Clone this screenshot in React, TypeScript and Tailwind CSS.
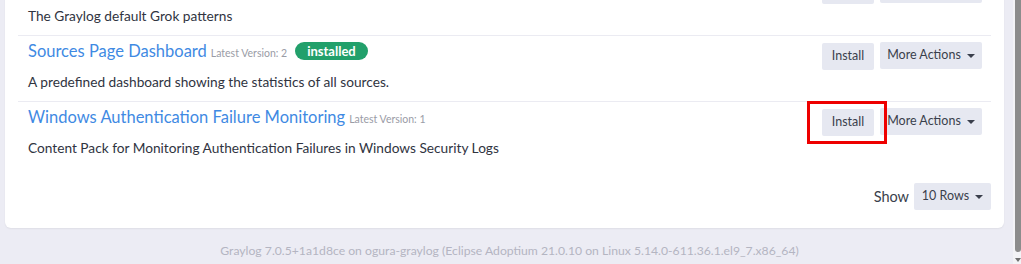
type Pack = {
  title: string;
  version: number;
  description: string;
  installed?: boolean;
  highlight?: boolean;
};

const packs: Pack[] = [
  { title: "Core Grok Patterns", version: 1, description: "The Graylog default Grok patterns" },
  { title: "Sources Page Dashboard", version: 2, description: "A predefined dashboard showing the statistics of all sources.", installed: true },
  {
    title: "Windows Authentication Failure Monitoring",
    version: 1,
    description: "Content Pack for Monitoring Authentication Failures in Windows Security Logs",
    highlight: true,
  },
];

function Caret() {
  return <span className="ml-[6px] inline-block h-0 w-0 border-x-[4px] border-t-[4px] border-x-transparent border-t-[#3a3f4c] align-middle" />;
}

function PackRow({ pack, last }: { pack: Pack; last: boolean }) {
  return (
    <div className={`flex justify-between pl-[10px] pr-[9px] pt-[4px] pb-[9px] ${last ? "" : "border-b border-[#ebebf2]"}`}>
      <div>
        <div className="flex h-[22px] items-baseline">
          <span className="text-[16.5px] leading-[22px] text-[#3f8ae3]">{pack.title}</span>
          <span className="ml-[4px] text-[10.5px] text-[#9a9ca6]">Latest Version: {pack.version}</span>
          {pack.installed && (
            <span className="ml-[8px] self-center rounded-full bg-[#22a06b] px-[12px] text-[13px] font-bold leading-[18px] text-white">
              installed
            </span>
          )}
        </div>
        <p className="mt-[10px] text-[13.7px] leading-[20px] text-[#30343f]">{pack.description}</p>
      </div>
      <div className="mt-[2px] flex h-[27px] shrink-0 gap-[6px]">
        <div className="relative">
          <button className="h-[27px] w-[52px] rounded-[2px] bg-[#e6e8f1] text-[12.5px] text-[#3a3f4c]">Install</button>
          {pack.highlight && (
            <div className="pointer-events-none absolute -left-[15px] -right-[13px] -top-[7px] -bottom-[9px] border-[3px] border-[#ee0000]" />
          )}
        </div>
        <button className="flex h-[27px] w-[102px] items-center justify-center rounded-[2px] bg-[#e6e8f1] text-[12.5px] text-[#3a3f4c]">
          More Actions
          <Caret />
        </button>
      </div>
    </div>
  );
}

export default function App() {
  return (
    <div className="flex h-[264px] w-[1021px] overflow-hidden bg-[#ececf4] font-['Lato',sans-serif]">
      <div className="min-w-0 flex-1 pl-[5px] pr-[9px]">
        <div className="-mt-[42px] rounded-[6px] bg-white px-[13px] pt-[12px] pb-[18px] shadow-[0_1px_2px_rgba(0,0,0,0.06)]">
          {packs.map((p, i) => (
            <PackRow key={p.title} pack={p} last={i === packs.length - 1} />
          ))}
          <div className="mt-[16px] flex items-center justify-end gap-[5px]">
            <span className="text-[14.5px] text-[#3a3f4c]">Show</span>
            <button className="flex h-[27px] w-[77px] items-center justify-center rounded-[2px] bg-[#e6e8f1] text-[12.5px] text-[#3a3f4c]">
              10 Rows
              <Caret />
            </button>
          </div>
        </div>
        <p className="mt-[14px] pl-[10px] text-center text-[12.2px] text-[#b4b5c2]">
          Graylog 7.0.5+1a1d8ce on ogura-graylog (Eclipse Adoptium 21.0.10 on Linux 5.14.0-611.36.1.el9_7.x86_64)
        </p>
      </div>
      <div className="flex w-[8px] shrink-0 flex-col items-end bg-[#f3f3f6]">
        <div className="h-[252px] w-[6px] rounded-b-[3px] bg-[#8c8c8c]" />
        <div className="mt-auto mb-[2px] h-0 w-0 border-x-[3px] border-t-[4px] border-x-transparent border-t-[#6f6f6f]" />
      </div>
    </div>
  );
}
